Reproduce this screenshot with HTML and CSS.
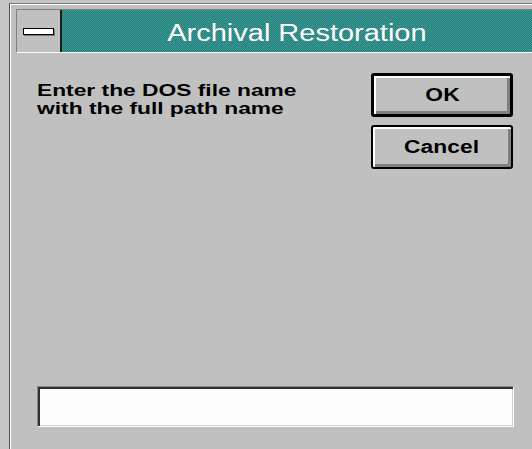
FILE: index.html
```html
<!DOCTYPE html>
<html lang="en">
<head>
<meta charset="utf-8">
<title>Archival Restoration</title>
<link rel="stylesheet" href="styles.css">
</head>
<body>
  <div class="window">
    <div class="titlebar">
      <div class="sysmenu"><span class="sysbar"></span></div>
      <div class="caption"><span class="caption-text">Archival Restoration</span></div>
    </div>
    <div class="client">
      <div class="top">
        <div class="prompt">
          <div class="line">Enter the DOS file name</div>
          <div class="line">with the full path name</div>
        </div>
        <div class="buttons">
          <button class="btn default" type="button"><span class="label">OK</span></button>
          <button class="btn" type="button"><span class="label">Cancel</span></button>
        </div>
      </div>
      <input class="field" type="text" aria-label="DOS file name">
    </div>
  </div>
</body>
</html>
```

FILE: styles.css
```css
html, body {
  margin: 0;
  padding: 0;
  overflow: hidden;
}

body {
  width: 532px;
  height: 449px;
  background: #c6c6c6;
  font-family: "Liberation Sans", Arial, sans-serif;
}

/* dialog frame */
.window {
  margin: 3px 0 0 9px;
  width: 523px;
  height: 460px;
  box-sizing: border-box;
  padding-top: 5px;
  background: #c0c0c0;
  border-top: 1px solid #7c7c7c;
  border-left: 1px solid #505050;
  box-shadow: inset 1px 1px 0 #ffffff;
}

/* caption bar */
.titlebar {
  margin-left: 6px;
  height: 42px;
  display: flex;
  border-top: 1px solid #808080;
  border-left: 1px solid #808080;
  border-bottom: 1px solid #ffffff;
}

.sysmenu {
  width: 43px;
  flex: none;
  background: #c0c0c0;
  border-right: 2px solid #1c1c1c;
  display: flex;
  align-items: center;
  justify-content: center;
}

.sysbar {
  display: block;
  width: 31px;
  height: 7px;
  box-sizing: border-box;
  margin: 1px 0 0 0;
  border: 1px solid #000000;
  background: #ffffff;
  box-shadow: 1px 1px 0 #7a7a7a;
}

/* dithered teal caption */
.caption {
  flex: 1;
  display: flex;
  align-items: center;
  justify-content: center;
  background-color: #2f8a86;
  background-image: repeating-conic-gradient(#12837f 0 25%, #4e9490 0 50%);
  background-size: 2px 2px;
  color: #ffffff;
}

.caption-text {
  display: inline-block;
  font-size: 23px;
  padding-top: 5px;
  transform: scaleX(1.26);
  white-space: nowrap;
}

/* dialog body */
.client {
  height: 374px;
  box-sizing: border-box;
  padding: 20px 18px 0 27px;
  display: flex;
  flex-direction: column;
  justify-content: space-between;
}

.top {
  display: flex;
  justify-content: space-between;
  align-items: flex-start;
}

.prompt {
  margin-top: 9px;
  font-size: 17px;
  font-weight: bold;
  line-height: 18px;
  color: #000000;
}

.line {
  transform: scaleX(1.34);
  transform-origin: left center;
  white-space: nowrap;
}

.buttons {
  width: 143px;
  display: flex;
  flex-direction: column;
  gap: 8px;
}

.btn {
  width: 142px;
  height: 44px;
  box-sizing: border-box;
  padding: 0;
  margin: 0;
  background: #c0c0c0;
  border: 2px solid #000000;
  border-radius: 3px;
  box-shadow: inset 2px 2px 0 #ffffff, inset -3px -3px 0 #808080;
  font-family: "Liberation Sans", Arial, sans-serif;
  font-size: 18px;
  font-weight: bold;
  color: #000000;
  display: flex;
  align-items: center;
  justify-content: center;
}

.btn.default {
  border-width: 3px;
}

.label {
  display: inline-block;
  transform: scaleX(1.27);
  white-space: nowrap;
}

.field {
  display: block;
  width: 100%;
  height: 41px;
  box-sizing: border-box;
  margin: 0;
  padding: 0 6px;
  background: #fdfdfd;
  border: 1px solid;
  border-color: #888888 #ffffff #ffffff #888888;
  box-shadow: inset 2px 2px 0 #303030, inset -1px -1px 0 #d0d0d0;
  font-family: "Liberation Sans", Arial, sans-serif;
  font-size: 17px;
  outline: none;
}
```
